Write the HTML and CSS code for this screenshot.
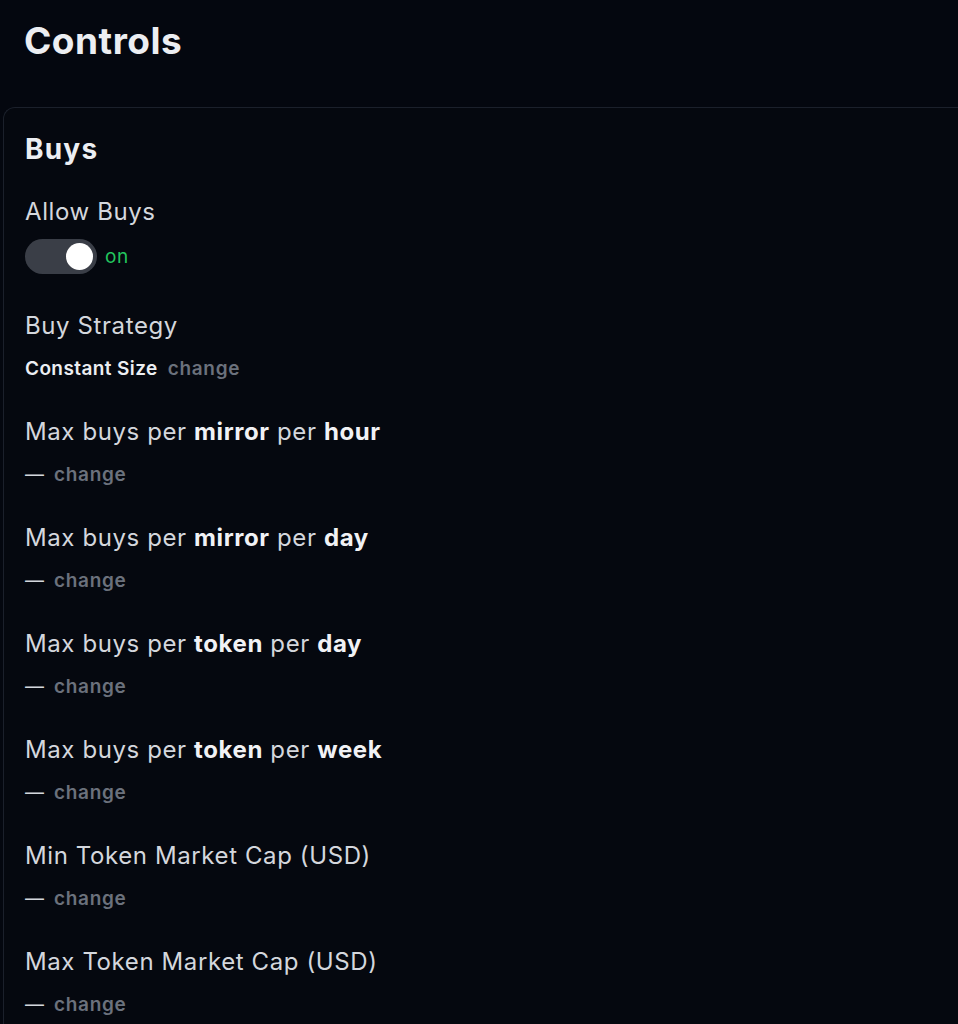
FILE: index.html
```html
<!DOCTYPE html>
<html>
<head>
<meta charset="utf-8">
<link rel="stylesheet" href="styles.css">
</head>
<body>
<div class="page">
  <h1 class="title">Controls</h1>
  <section class="card">
    <h2 class="card-title">Buys</h2>
    <div class="field">
      <div class="label">Allow Buys</div>
      <div class="toggle-row">
        <span class="toggle"><span class="knob"></span></span>
        <span class="on">on</span>
      </div>
    </div>
    <div class="field">
      <div class="label">Buy Strategy</div>
      <div class="value"><span class="strong">Constant Size</span><span class="change">change</span></div>
    </div>
    <div class="field">
      <div class="label">Max buys per <b>mirror</b> per <b>hour</b></div>
      <div class="value"><span class="dash">—</span><span class="change">change</span></div>
    </div>
    <div class="field">
      <div class="label">Max buys per <b>mirror</b> per <b>day</b></div>
      <div class="value"><span class="dash">—</span><span class="change">change</span></div>
    </div>
    <div class="field">
      <div class="label">Max buys per <b>token</b> per <b>day</b></div>
      <div class="value"><span class="dash">—</span><span class="change">change</span></div>
    </div>
    <div class="field">
      <div class="label">Max buys per <b>token</b> per <b>week</b></div>
      <div class="value"><span class="dash">—</span><span class="change">change</span></div>
    </div>
    <div class="field">
      <div class="label">Min Token Market Cap (USD)</div>
      <div class="value"><span class="dash">—</span><span class="change">change</span></div>
    </div>
    <div class="field">
      <div class="label">Max Token Market Cap (USD)</div>
      <div class="value"><span class="dash">—</span><span class="change">change</span></div>
    </div>
  </section>
</div>
</body>
</html>
```

FILE: styles.css
```css
html, body {
  margin: 0;
  padding: 0;
  background: #04070f;
  font-family: Inter, "Noto Sans", sans-serif;
  color: #d6d9df;
}
.page {
  padding: 18px 0 0 3px;
}
.title {
  margin: 0 0 43px 21px;
  font-size: 37px;
  line-height: 46px;
  letter-spacing: 0.5px;
  font-weight: 700;
  color: #eceef2;
}
.card {
  border: 1px solid #1b202b;
  border-right: none;
  border-radius: 12px 0 0 12px;
  background: #05080f;
  padding: 23px 0 0 21px;
  min-height: 1000px;
}
.card-title {
  margin: 0 0 29px 0;
  font-size: 28px;
  line-height: 36px;
  letter-spacing: 1.2px;
  font-weight: 700;
  color: #eceef2;
}
.field {
  margin-bottom: 33px;
}
.label {
  font-size: 24px;
  line-height: 32px;
  letter-spacing: 0.6px;
  color: #d4d7dd;
}
.label b {
  font-weight: 700;
  color: #f1f2f5;
}
.toggle-row {
  display: flex;
  align-items: center;
  gap: 8px;
  margin-top: 11px;
  padding-bottom: 3px;
}
.toggle {
  width: 72px;
  height: 35px;
  border-radius: 18px;
  background: #3a3e47;
  display: flex;
  align-items: center;
  justify-content: flex-end;
  padding-right: 4px;
  box-sizing: border-box;
}
.knob {
  width: 27px;
  height: 27px;
  border-radius: 50%;
  background: #ffffff;
}
.on {
  color: #22c55e;
  font-size: 19px;
  letter-spacing: 0.6px;
}
.value {
  display: flex;
  align-items: center;
  gap: 10px;
  margin-top: 13px;
  font-size: 19px;
  line-height: 28px;
  letter-spacing: 0.7px;
  font-weight: 600;
}
.strong {
  color: #eceef2;
  letter-spacing: 0.4px;
}
.dash {
  color: #d4d7dd;
  font-weight: 400;
  letter-spacing: 0;
}
.change {
  color: #6b717c;
}
```
